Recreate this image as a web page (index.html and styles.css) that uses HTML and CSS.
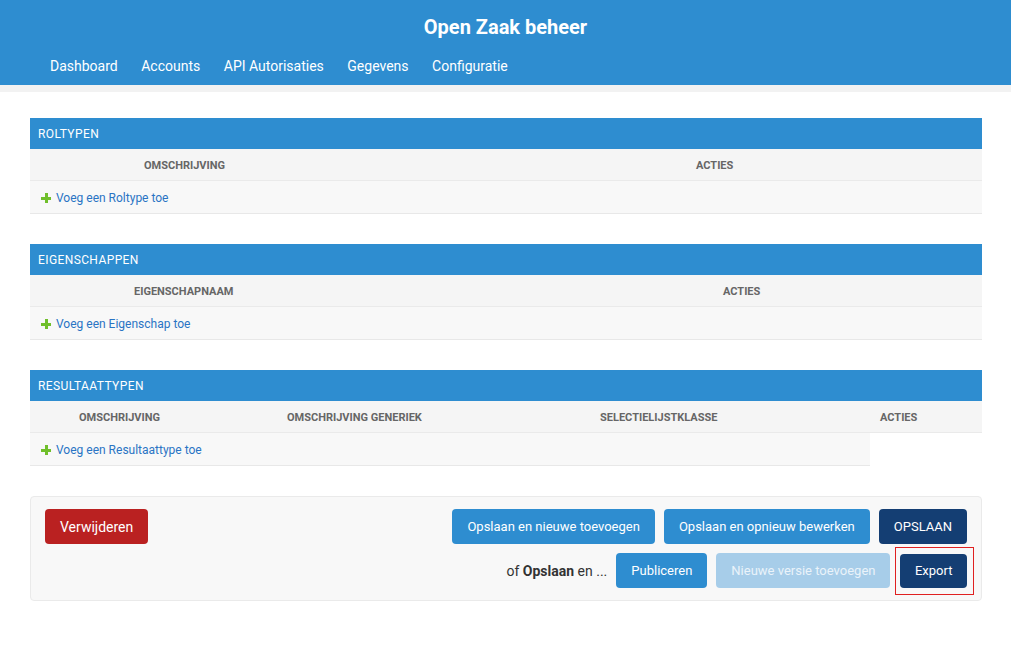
FILE: index.html
```html
<!DOCTYPE html>
<html lang="nl">
<head>
    <meta charset="UTF-8">
    <title>Open Zaak beheer</title>
    <link rel="stylesheet" href="styles.css">
</head>
<body>
    <div class="header">
        <h1>Open Zaak beheer</h1>
        <div class="nav">
            <a href="#">Dashboard</a>
            <a href="#">Accounts</a>
            <a href="#">API Autorisaties</a>
            <a href="#">Gegevens</a>
            <a href="#">Configuratie</a>
        </div>
    </div>
    <div class="band"></div>

    <div class="content">
        <div class="inline-group">
            <h2>Roltypen</h2>
            <div class="thead roltypen">
                <span>Omschrijving</span>
                <span>Acties</span>
            </div>
            <div class="add-row">
                <a href="#"><span class="plus"></span>Voeg een Roltype toe</a>
            </div>
        </div>

        <div class="inline-group">
            <h2>Eigenschappen</h2>
            <div class="thead eigenschappen">
                <span>Eigenschapnaam</span>
                <span>Acties</span>
            </div>
            <div class="add-row">
                <a href="#"><span class="plus"></span>Voeg een Eigenschap toe</a>
            </div>
        </div>

        <div class="inline-group">
            <h2>Resultaattypen</h2>
            <div class="thead resultaattypen">
                <span>Omschrijving</span>
                <span>Omschrijving generiek</span>
                <span>Selectielijstklasse</span>
                <span>Acties</span>
            </div>
            <div class="add-row short">
                <a href="#"><span class="plus"></span>Voeg een Resultaattype toe</a>
            </div>
        </div>

        <div class="submit-row">
            <div class="submit-line">
                <button class="btn delete">Verwijderen</button>
                <div class="spacer"></div>
                <button class="btn">Opslaan en nieuwe toevoegen</button>
                <button class="btn">Opslaan en opnieuw bewerken</button>
                <button class="btn dark">OPSLAAN</button>
            </div>
            <div class="submit-line second">
                <span class="or-text">of <b>Opslaan</b> en ...</span>
                <button class="btn">Publiceren</button>
                <button class="btn disabled">Nieuwe versie toevoegen</button>
                <span class="highlight"><button class="btn dark export">Export</button></span>
            </div>
        </div>
    </div>
</body>
</html>
```

FILE: styles.css
```css
body {
    margin: 0;
    font-family: Roboto, "Liberation Sans", sans-serif;
    font-size: 14px;
    color: #333;
    background: #fff;
}

.header {
    background-color: #2e8dd0;
    height: 85px;
    color: #fff;
}

.header h1 {
    margin: 0;
    padding-top: 15px;
    height: 25px;
    text-align: center;
    font-size: 20px;
    font-weight: 700;
    line-height: 25px;
}

.nav {
    display: flex;
    gap: 23.5px;
    padding-left: 50px;
    margin-top: 16px;
}

.nav a {
    color: #fff;
    text-decoration: none;
    font-size: 14px;
    line-height: 20px;
}

.band {
    height: 7px;
    background-color: #f2f2f2;
}

.content {
    padding: 26px 29px 0 30px;
}

.inline-group {
    margin-bottom: 30px;
}

.inline-group h2 {
    margin: 0;
    background-color: #2e8dd0;
    color: #fff;
    font-size: 12px;
    font-weight: 400;
    letter-spacing: 0.4px;
    text-transform: uppercase;
    height: 31px;
    line-height: 33px;
    padding-left: 8px;
}

.thead {
    display: grid;
    height: 31px;
    line-height: 34px;
    background-color: #f5f5f5;
    border-bottom: 1px solid #eaeaea;
}

.thead span {
    font-size: 11px;
    font-weight: 700;
    color: #666;
    text-transform: uppercase;
}

.thead.roltypen {
    grid-template-columns: 552px 1fr;
    padding-left: 114px;
}

.thead.eigenschappen {
    grid-template-columns: 589px 1fr;
    padding-left: 104px;
}

.thead.resultaattypen {
    grid-template-columns: 208px 313px 280px 1fr;
    padding-left: 49px;
}

.add-row {
    height: 32px;
    line-height: 32px;
    background-color: #f8f8f8;
    border-bottom: 1px solid #e8e8e8;
    padding-left: 11px;
}

.add-row.short {
    width: 829px;
}

.add-row a {
    color: #2a74c4;
    text-decoration: none;
    font-size: 12px;
}

.plus {
    display: inline-block;
    width: 10px;
    height: 10px;
    margin-right: 5px;
    vertical-align: -1px;
    background:
        linear-gradient(#70bf2b, #70bf2b) center / 10px 3px no-repeat,
        linear-gradient(#70bf2b, #70bf2b) center / 3px 10px no-repeat;
}

.submit-row {
    background-color: #f8f8f8;
    border: 1px solid #eaeaea;
    border-radius: 4px;
    padding: 12px 14px 12px 14px;
}

.submit-line {
    display: flex;
    align-items: center;
    gap: 9px;
}

.submit-line.second {
    justify-content: flex-end;
    margin-top: 9px;
}

.spacer {
    flex: 1;
}

.btn {
    font-family: Roboto, "Liberation Sans", sans-serif;
    font-size: 13px;
    color: #fff;
    background-color: #2e8dd0;
    border: none;
    border-radius: 4px;
    height: 35px;
    padding: 0 15px;
    cursor: pointer;
}

.btn.delete {
    background-color: #ba2121;
    font-size: 14px;
}

.btn.dark {
    background-color: #143e73;
}

.btn.disabled {
    background-color: #a7cde9;
    color: #eaf3fa;
}

.or-text {
    font-size: 14px;
    color: #333;
}

.highlight {
    display: flex;
    border: 1px solid #e02020;
    padding: 6px 6px 6px 4px;
    margin: -7px -7px -7px -4px;
}

.btn.export {
    height: 34px;
    padding: 0 14.5px;
}
```
